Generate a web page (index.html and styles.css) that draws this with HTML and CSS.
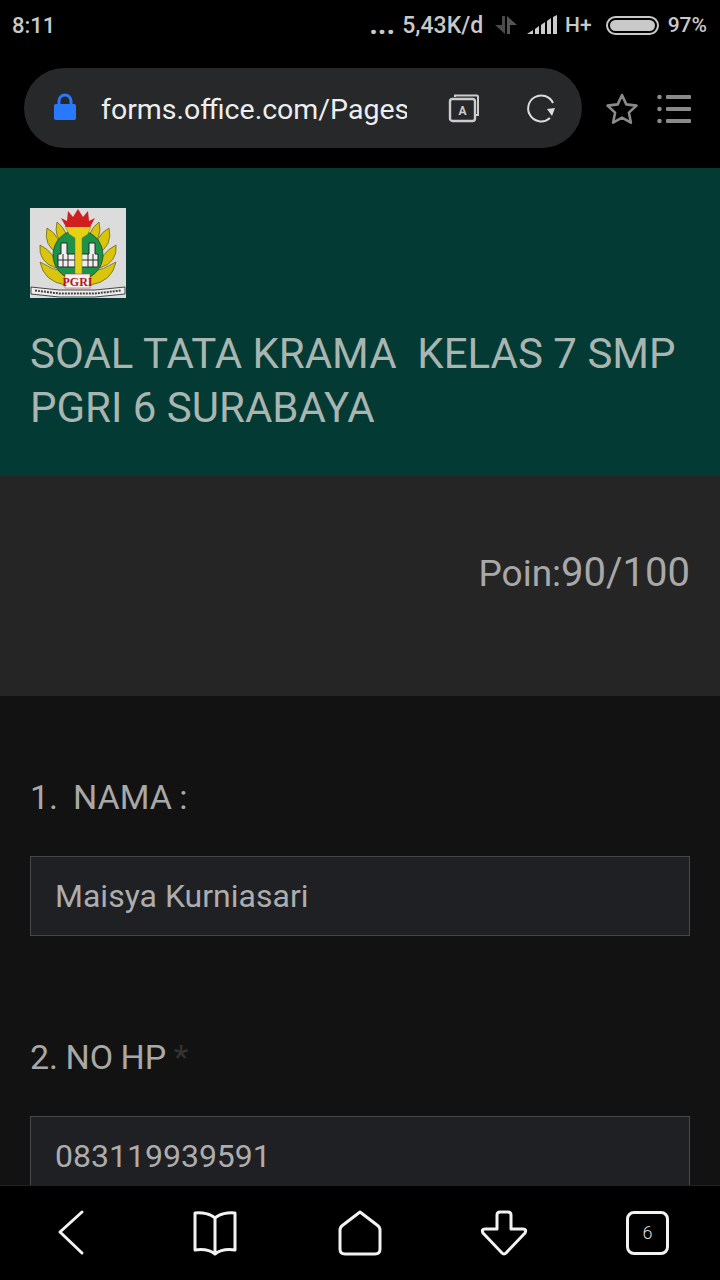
FILE: index.html
```html
<!DOCTYPE html>
<html>

<head>
    <meta charset="UTF-8">
    <meta name="viewport" content="width=device-width, initial-scale=1.0">
    <title>SOAL TATA KRAMA KELAS 7 SMP PGRI 6 SURABAYA</title>
    <link rel="stylesheet" href="styles.css">
</head>

<body>
    <div class="screen">
        <div class="status-bar">
            <span class="time">8:11</span>
            <div class="status-right">
                <span class="dots">...</span>
                <span class="speed">5,43K/d</span>
                <svg class="net-icon" width="22" height="22" viewBox="0 0 22 22">
                    <path d="M7 2h3v18L0 11h7z" fill="#4a4a4a"/>
                    <path d="M12 20V2l10 9h-7v9z" fill="#555"/>
                </svg>
                <svg class="signal-icon" width="32" height="20" viewBox="0 0 32 20">
                    <path d="M1 19l6-4v4z" fill="#ccc"/>
                    <path d="M9 19v-5l4-3v8z" fill="#ccc"/>
                    <path d="M15 19V10l4-3v12z" fill="#ccc"/>
                    <path d="M21 19V6l4-3v16z" fill="#ccc"/>
                    <path d="M27 19V2l4-2v19z" fill="#ccc"/>
                </svg>
                <span class="network">H+</span>
                <div class="battery"><div class="battery-fill"></div></div>
                <span class="percent">97%</span>
            </div>
        </div>

        <div class="browser-bar">
            <div class="url-pill">
                <svg class="lock" width="24" height="28" viewBox="0 0 24 28">
                    <path d="M6 12V8a6 6 0 0 1 12 0v4" fill="none" stroke="#2979ff" stroke-width="3"/>
                    <rect x="1" y="11" width="22" height="16" rx="2" fill="#2979ff"/>
                </svg>
                <span class="url">forms.office.com/Pages</span>
                <svg class="translate" width="32" height="30" viewBox="0 0 32 30">
                    <path d="M7 4V2.5h22a1.5 1.5 0 0 1 1 1V22h-2" fill="none" stroke="#ccc" stroke-width="2"/>
                    <rect x="2" y="6" width="25" height="22" rx="2.5" fill="none" stroke="#ccc" stroke-width="2.4"/>
                    <text x="14.5" y="22" class="translate-letter" text-anchor="middle">A</text>
                </svg>
                <svg class="reload" width="30" height="30" viewBox="0 0 30 30">
                    <path d="M27 10A13 13 0 1 0 24 25" fill="none" stroke="#ddd" stroke-width="2"/>
                    <path d="M29 15l-8 1 5 7z" fill="#ddd"/>
                </svg>
            </div>
            <svg class="star" width="34" height="34" viewBox="0 0 34 34">
                <path d="M17 3l4.3 9.4 10.2 1.2-7.6 7 2 10.1-8.9-5-8.9 5 2-10.1-7.6-7 10.2-1.2z" fill="none" stroke="#8a8a8a" stroke-width="2.6" stroke-linejoin="round"/>
            </svg>
            <svg class="menu" width="34" height="30" viewBox="0 0 34 30">
                <g fill="#8a8a8a">
                    <circle cx="2.5" cy="3" r="2.3"/>
                    <circle cx="2.5" cy="15" r="2.3"/>
                    <circle cx="2.5" cy="27" r="2.3"/>
                    <rect x="9" y="1" width="25" height="4" rx="1"/>
                    <rect x="9" y="13" width="25" height="4" rx="1"/>
                    <rect x="9" y="25" width="25" height="4" rx="1"/>
                </g>
            </svg>
        </div>

        <header class="form-header">
            <div class="logo">
                <svg width="96" height="90" viewBox="0 0 96 90">
                    <rect width="96" height="90" fill="#dcdcdc"/>
                    <g id="wing" fill="#d9c40e" stroke="#6e6a14" stroke-width="0.8">
                        <path d="M27 14Q40 24 36 38 23 30 27 14z"/>
                        <path d="M17 20Q32 28 29 46 13 38 17 20z"/>
                        <path d="M10 37Q26 45 26 60 8 54 10 37z"/>
                        <path d="M10 54Q22 62 36 64L36 77Q14 74 10 54z"/>
                    </g>
                    <use href="#wing" transform="matrix(-1 0 0 1 96 0)"/>
                    <circle cx="48" cy="47" r="25" fill="#1b9449" stroke="#1b4a24" stroke-width="0.8"/>
                    <g fill="#eee" stroke="#2a2a2a" stroke-width="1">
                        <path d="M28 59V46h3V35h6v11h8v13z"/>
                        <path d="M68 59V46h-3V35h-6v11h-8v13z"/>
                        <path d="M28 52h17M33 46v13M38 46v13M51 52h17M58 46v13M63 46v13" fill="none"/>
                    </g>
                    <path d="M35 18h26l-3 8-6 4v38h-7V30l-6-4z" fill="#e6d215" stroke="#7a7418" stroke-width="0.5"/>
                    <path d="M36 19L31 10l6 3 1-10 5 6 5-8 5 8 5-6 1 10 6-3-5 9z" fill="#d01f1f"/>
                    <rect x="35" y="66" width="25" height="14" fill="#f2f2f2" stroke="#a33" stroke-width="0.5"/>
                    <text x="47.5" y="78" class="logo-pgri" text-anchor="middle">PGRI</text>
                    <path d="M1 79l28 3h36l30-3v7l-30 3H29L1 86z" fill="#eee" stroke="#333" stroke-width="0.9"/>
                    <path d="M5 82.500l24 3h36l26-3" fill="none" stroke="#444" stroke-width="2" stroke-dasharray="2 1"/>
                </svg>
            </div>
            <h1 class="form-title">SOAL TATA KRAMA&nbsp; KELAS 7 SMP PGRI 6 SURABAYA</h1>
        </header>

        <section class="score-band">
            <span class="score-label">Poin:</span><span class="score-value">90/100</span>
        </section>

        <main class="questions">
            <div class="question">
                <div class="question-title">1.&nbsp; NAMA :</div>
                <div class="answer">Maisya Kurniasari</div>
            </div>
            <div class="question">
                <div class="question-title">2. NO HP <span class="required">*</span></div>
                <div class="answer">083119939591</div>
            </div>
        </main>

        <nav class="bottom-bar">
            <svg width="44" height="48" viewBox="0 0 44 48">
                <path d="M31 3L9 23 31 44" fill="none" stroke="#f2f2f2" stroke-width="3" stroke-linecap="round" stroke-linejoin="round"/>
            </svg>
            <svg width="44" height="48" viewBox="0 0 44 48">
                <path d="M22 9C18 5 9 3 2 4v37c7-1 15 0 20 4 5-4 13-5 20-4V4c-7-1-16 1-20 5zM22 9v36" fill="none" stroke="#f2f2f2" stroke-width="3" stroke-linejoin="round"/>
            </svg>
            <svg width="46" height="48" viewBox="0 0 46 48">
                <path d="M24 3L7 16q-3 2-3 5v19q0 5 5 5h30q5 0 5-5V21q0-3-3-5z" fill="none" stroke="#f2f2f2" stroke-width="3" stroke-linejoin="round"/>
            </svg>
            <svg width="48" height="48" viewBox="0 0 48 48">
                <path d="M17 20V6q0-3 3-3h8q3 0 3 3v14h12q4 0 2 4L26 44q-2 2-4 0L3 24q-2-4 2-4z" fill="none" stroke="#f2f2f2" stroke-width="3" stroke-linejoin="round"/>
            </svg>
            <div class="tabs-count">6</div>
        </nav>
    </div>
</body>

</html>
```

FILE: styles.css
```css
body {
    margin: 0;
    background: #000;
    font-family: Roboto, "Liberation Sans", sans-serif;
}

.screen {
    width: 720px;
    height: 1280px;
    overflow: hidden;
    position: relative;
    background: #121212;
}

.status-bar {
    height: 50px;
    background: #000;
    color: #c9c9c9;
    font-size: 21px;
    font-weight: 500;
    display: flex;
    justify-content: space-between;
    align-items: center;
    padding: 0 13px 0 12px;
}

.time {
    font-size: 22px;
}

.status-right {
    display: flex;
    align-items: center;
}

.dots {
    font-size: 30px;
    font-weight: 700;
    margin-right: 7px;
    position: relative;
    top: -2px;
}

.speed {
    font-size: 23px;
}

.net-icon {
    margin: 0 9px 0 12px;
}

.signal-icon {
    margin-right: 7px;
}

.battery {
    width: 53px;
    height: 19px;
    margin: 0 9px 0 14px;
    border: 2px solid #c9c9c9;
    border-radius: 10px;
    box-sizing: border-box;
    padding: 2px;
}

.battery-fill {
    height: 100%;
    background: #c9c9c9;
    border-radius: 6px;
}

.browser-bar {
    height: 118px;
    background: #000;
    display: flex;
    align-items: flex-start;
    padding: 18px 0 0 24px;
    box-sizing: border-box;
}

.url-pill {
    width: 558px;
    height: 80px;
    border-radius: 40px;
    background: #27282a;
    display: flex;
    align-items: center;
    box-sizing: border-box;
    padding-left: 29px;
}

.lock {
    flex-shrink: 0;
    margin-top: -2px;
}

.url {
    width: 306px;
    margin-left: 24px;
    padding-top: 2px;
    color: #eee;
    font-size: 28.5px;
    white-space: nowrap;
    overflow: hidden;
}

.translate {
    margin-left: 41px;
    flex-shrink: 0;
}

.translate-letter {
    font-size: 12px;
    font-weight: 700;
    fill: #ccc;
}

.reload {
    margin-left: 46px;
    flex-shrink: 0;
}

.star {
    margin: 24px 0 0 23px;
}

.menu {
    margin: 26px 0 0 18px;
}

.form-header {
    height: 308px;
    background: #033a33;
    box-sizing: border-box;
    padding: 40px 30px 0;
}

.logo {
    width: 96px;
    height: 90px;
}

.logo svg {
    display: block;
}

.logo-pgri {
    font-family: "Liberation Serif", serif;
    font-size: 12px;
    font-weight: 700;
    fill: #b01818;
}

.form-title {
    margin: 29px 0 0;
    color: #a9b5b1;
    font-size: 42px;
    line-height: 54px;
    font-weight: 400;
}

.score-band {
    height: 220px;
    background: #252525;
    box-sizing: border-box;
    padding: 72px 30px 0 0;
    text-align: right;
    color: #a8a8a8;
    line-height: 50px;
}

.score-label {
    font-size: 37px;
}

.score-value {
    font-size: 40px;
}

.questions {
    padding: 76px 30px 0;
}

.question {
    margin-bottom: 96px;
}

.question-title {
    color: #a8a8a8;
    font-size: 34px;
    word-spacing: -1px;
    line-height: 51px;
}

.required {
    color: #333;
}

.answer {
    margin-top: 33px;
    height: 80px;
    box-sizing: border-box;
    border: 1px solid #45474a;
    background: #1f2024;
    color: #adadad;
    font-size: 32px;
    line-height: 78px;
    padding-left: 24px;
}

.bottom-bar {
    position: absolute;
    left: 0;
    right: 0;
    bottom: 0;
    height: 95px;
    background: #000;
    border-top: 1px solid #222;
    box-sizing: border-box;
    padding: 0 51px;
    display: flex;
    justify-content: space-between;
    align-items: center;
}

.tabs-count {
    width: 43px;
    height: 44px;
    box-sizing: border-box;
    border: 3px solid #f2f2f2;
    border-radius: 8px;
    color: #ddd;
    font-size: 18px;
    font-weight: 300;
    text-align: center;
    line-height: 38px;
}
```
